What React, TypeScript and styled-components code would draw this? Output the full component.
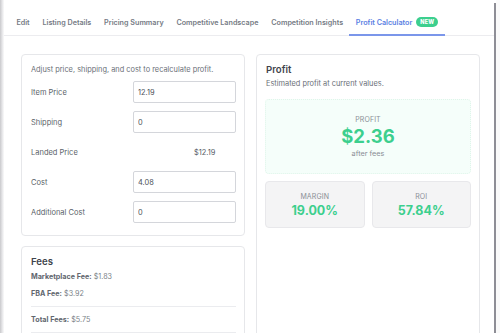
import { Fragment } from "react";
import styled, { createGlobalStyle } from "styled-components";

const GlobalStyle = createGlobalStyle`
  html, body {
    margin: 0;
    padding: 0;
    background: #ffffff;
    font-family: Inter, "Noto Sans", sans-serif;
    color: #374151;
  }
  * {
    box-sizing: border-box;
  }
`;

const Frame = styled.div`
  width: 500px;
  height: 333px;
  display: flex;
  overflow: hidden;
  background: #ffffff;
`;

const Shade = styled.div`
  width: 4px;
  flex-shrink: 0;
  background: linear-gradient(to right, #c9c9cc, #ededef 70%, #fafafa);
`;

const Panel = styled.div`
  flex: 1;
  display: flex;
  flex-direction: column;
  background: #ffffff;
`;

const Edge = styled.div`
  width: 2px;
  flex-shrink: 0;
  margin-top: 3px;
  background: #8e8e96;
`;

const Gutter = styled.div`
  width: 4px;
  flex-shrink: 0;
  background: #fafafa;
`;

const TopHint = styled.div`
  width: 45px;
  height: 1px;
  margin: 5px 0 0 6px;
  background: #f0f0f2;
`;

const TabBar = styled.div`
  display: flex;
  padding: 5px 0 0 6px;
  border-bottom: 1px solid #ececef;
`;

const Tab = styled.div<{ $active?: boolean }>`
  display: flex;
  align-items: center;
  gap: 4px;
  height: 26px;
  padding: 0 6.4px;
  font-size: 7.2px;
  font-weight: 600;
  color: ${(p) => (p.$active ? "#5b7fe3" : "#767b85")};
  border-bottom: 2px solid ${(p) => (p.$active ? "#7b96ea" : "transparent")};
  margin-bottom: -1px;
  white-space: nowrap;
`;

const Badge = styled.span`
  background: #3ccf8e;
  color: #ffffff;
  font-size: 5.5px;
  font-weight: 800;
  padding: 2px 4px;
  border-radius: 6px;
  letter-spacing: 0.2px;
`;

const Content = styled.div`
  display: grid;
  grid-template-columns: 224px 224px;
  gap: 11px;
  padding: 18px 0 0 17px;
`;

const Column = styled.div`
  display: flex;
  flex-direction: column;
  gap: 10px;
`;

const Card = styled.div<{ $tall?: boolean }>`
  border: 1px solid #e6e7ea;
  border-radius: 4px;
  padding: 9px 8px 12px 8px;
  background: #ffffff;
  min-height: ${(p) => (p.$tall ? "300px" : "auto")};
`;

const Hint = styled.div`
  font-size: 7.4px;
  line-height: 12px;
  color: #6b7078;
  margin: 0 0 5px 1px;
`;

const FieldGrid = styled.div`
  display: grid;
  grid-template-columns: 1fr 103px;
  row-gap: 8px;
  padding-left: 1px;
`;

const Label = styled.div`
  font-size: 7.5px;
  color: #5a5f68;
  display: flex;
  align-items: center;
  height: 22px;
`;

const Input = styled.input`
  width: 103px;
  height: 22px;
  border: 1px solid #d4d6db;
  border-radius: 2px;
  padding: 0 4px;
  font-family: Inter, "Noto Sans", sans-serif;
  font-size: 7.4px;
  color: #4b5058;
  background: #ffffff;
  outline: none;
`;

const Value = styled.div`
  font-size: 7.4px;
  color: #555a63;
  display: flex;
  align-items: center;
  padding-left: 61px;
  height: 22px;
`;

const CardTitle = styled.div`
  font-size: 9.6px;
  line-height: 12px;
  font-weight: 600;
  color: #3f444c;
  margin-left: 1px;
`;

const FeeLine = styled.div`
  font-size: 7.2px;
  line-height: 17px;
  color: #7a7f87;
  margin-left: 1px;
  b {
    font-weight: 700;
    color: #61666e;
  }
`;

const Divider = styled.hr`
  border: none;
  border-top: 1px solid #ebecef;
  margin: 4px 0 4px 1px;
`;

const Sub = styled.div`
  font-size: 7.4px;
  line-height: 14px;
  color: #6b7078;
  margin: 1px 0 0 1px;
`;

const ProfitBox = styled.div`
  margin-top: 8px;
  height: 75px;
  border: 1px dotted #dff5ea;
  border-radius: 4px;
  background: #f5fefa;
  display: flex;
  flex-direction: column;
  align-items: center;
  justify-content: center;
`;

const StatLabel = styled.div`
  font-size: 7px;
  letter-spacing: 0.1px;
  color: #8a8e96;
  line-height: 10px;
`;

const BigValue = styled.div`
  font-size: 18.5px;
  font-weight: 700;
  color: #3ccf8e;
  line-height: 22px;
  margin: 0 0 2px;
`;

const Small = styled.div`
  font-size: 7.3px;
  color: #8a8e96;
  line-height: 10px;
`;

const StatRow = styled.div`
  display: grid;
  grid-template-columns: 1fr 1fr;
  gap: 7px;
  margin-top: 7px;
`;

const StatBox = styled.div`
  height: 47px;
  background: #f4f4f5;
  border: 1px solid #e8e8eb;
  border-radius: 4px;
  display: flex;
  flex-direction: column;
  align-items: center;
  justify-content: center;
  gap: 1px;
`;

const StatValue = styled.div`
  font-size: 12.5px;
  font-weight: 700;
  color: #3ccf8e;
  line-height: 15px;
`;

const tabs = [
  "Edit",
  "Listing Details",
  "Pricing Summary",
  "Competitive Landscape",
  "Competition Insights",
];

const fields = [
  { label: "Item Price", value: "12.19" },
  { label: "Shipping", value: "0" },
];

const costs = [
  { label: "Cost", value: "4.08" },
  { label: "Additional Cost", value: "0" },
];

export default function App() {
  return (
    <>
      <GlobalStyle />
      <Frame>
        <Shade />
        <Panel>
          <TopHint />
          <TabBar>
            {tabs.map((t) => (
              <Tab key={t}>{t}</Tab>
            ))}
            <Tab $active>
              Profit Calculator <Badge>NEW</Badge>
            </Tab>
          </TabBar>
          <Content>
            <Column>
              <Card>
                <Hint>Adjust price, shipping, and cost to recalculate profit.</Hint>
                <FieldGrid>
                  {fields.map((f) => (
                    <Fragment key={f.label}>
                      <Label>{f.label}</Label>
                      <Input defaultValue={f.value} />
                    </Fragment>
                  ))}
                  <Label>Landed Price</Label>
                  <Value>$12.19</Value>
                  {costs.map((f) => (
                    <Fragment key={f.label}>
                      <Label>{f.label}</Label>
                      <Input defaultValue={f.value} />
                    </Fragment>
                  ))}
                </FieldGrid>
              </Card>
              <Card>
                <CardTitle>Fees</CardTitle>
                <FeeLine>
                  <b>Marketplace Fee:</b> $1.83
                </FeeLine>
                <FeeLine>
                  <b>FBA Fee:</b> $3.92
                </FeeLine>
                <Divider />
                <FeeLine>
                  <b>Total Fees:</b> $5.75
                </FeeLine>
                <Divider />
              </Card>
            </Column>
            <Card $tall>
              <CardTitle>Profit</CardTitle>
              <Sub>Estimated profit at current values.</Sub>
              <ProfitBox>
                <StatLabel>PROFIT</StatLabel>
                <BigValue>$2.36</BigValue>
                <Small>after fees</Small>
              </ProfitBox>
              <StatRow>
                <StatBox>
                  <StatLabel>MARGIN</StatLabel>
                  <StatValue>19.00%</StatValue>
                </StatBox>
                <StatBox>
                  <StatLabel>ROI</StatLabel>
                  <StatValue>57.84%</StatValue>
                </StatBox>
              </StatRow>
            </Card>
          </Content>
        </Panel>
        <Edge />
        <Gutter />
      </Frame>
    </>
  );
}
